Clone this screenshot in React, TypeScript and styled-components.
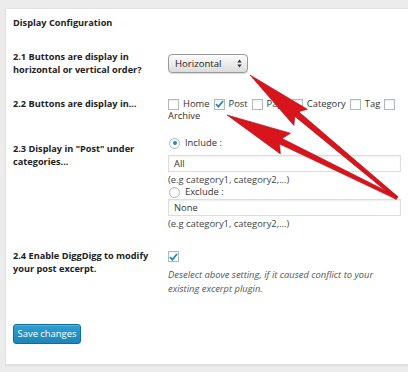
import React from "react";
import styled, { createGlobalStyle } from "styled-components";

const GlobalStyle = createGlobalStyle`
  html, body {
    margin: 0;
    padding: 0;
    background: #ececec;
    width: 408px;
    height: 372px;
    overflow: hidden;
  }
  * { box-sizing: border-box; }
  body {
    font-family: "Open Sans", "Liberation Sans", sans-serif;
    color: #333;
  }
`;

type Pt = [number, number];

// builds a tapered arrow polygon from tail to tip
const arrowPoints = (
  tip: Pt,
  tail: Pt,
  headLen: number,
  headWidth: number,
  shaftNear: number,
  shaftTail: number
) => {
  const dx = tail[0] - tip[0];
  const dy = tail[1] - tip[1];
  const len = Math.sqrt(dx * dx + dy * dy);
  const ux = dx / len;
  const uy = dy / len;
  const nx = -uy;
  const ny = ux;
  const base: Pt = [tip[0] + ux * headLen, tip[1] + uy * headLen];
  const neck: Pt = [base[0] - ux * 5, base[1] - uy * 5];
  const p = (c: Pt, w: number): string =>
    `${(c[0] + nx * w).toFixed(1)},${(c[1] + ny * w).toFixed(1)}`;
  return [
    `${tip[0]},${tip[1]}`,
    p(base, headWidth / 2),
    p(neck, shaftNear / 2),
    p(tail, shaftTail / 2),
    p(tail, -shaftTail / 2),
    p(neck, -shaftNear / 2),
    p(base, -headWidth / 2),
  ].join(" ");
};

const Page = styled.div`
  position: relative;
  width: 408px;
  height: 372px;
  padding-top: 8px;
  padding-left: 5px;
`;

const Panel = styled.div`
  background: #fff;
  border: 1px solid #e2e2e2;
  border-right: none;
  box-shadow: 0 1px 1px rgba(0, 0, 0, 0.05);
  height: 357px;
  padding: 7px 0 0 7px;
`;

const Title = styled.h3`
  margin: 0;
  font-size: 9.2px;
  line-height: 14px;
  font-weight: 700;
  color: #222;
`;

const Row = styled.div<{ $top: number }>`
  display: grid;
  grid-template-columns: 155px 233px;
  margin-top: ${({ $top }) => $top}px;
`;

const Label = styled.div<{ $offset?: number }>`
  font-size: 9.2px;
  line-height: 12.5px;
  font-weight: 700;
  color: #222;
  margin-top: ${({ $offset }) => $offset ?? 0}px;
`;

const Field = styled.div<{ $offset?: number }>`
  font-size: 9.4px;
  line-height: 12px;
  color: #333;
  margin-top: ${({ $offset }) => $offset ?? 0}px;
`;

const Select = styled.div`
  width: 80px;
  height: 19px;
  border: 1px solid #9a9a9a;
  border-radius: 4px;
  background: linear-gradient(#fdfdfd, #dcdcdc);
  box-shadow: 0 1px 1px rgba(0, 0, 0, 0.15);
  display: flex;
  align-items: center;
  justify-content: space-between;
  padding: 0 5px 0 6px;
  font-size: 9.6px;
  color: #222;
`;

const Options = styled.div`
  display: flex;
  flex-wrap: wrap;
  align-items: center;
`;

const Opt = styled.label`
  display: inline-flex;
  align-items: center;
  gap: 4px;
  margin-right: 4px;
  white-space: nowrap;
`;

const Box = styled.span`
  display: inline-flex;
  align-items: center;
  justify-content: center;
  width: 11px;
  height: 11px;
  border: 1px solid #b4b9be;
  background: #fff;
  box-shadow: inset 0 1px 2px rgba(0, 0, 0, 0.08);
`;

const Radio = styled.span<{ $checked?: boolean }>`
  display: inline-flex;
  align-items: center;
  justify-content: center;
  width: 11px;
  height: 11px;
  border: 1px solid #b4b9be;
  border-radius: 50%;
  background: #fff;
  box-shadow: inset 0 1px 2px rgba(0, 0, 0, 0.08);
  &::after {
    content: "";
    display: ${({ $checked }) => ($checked ? "block" : "none")};
    width: 4px;
    height: 4px;
    border-radius: 50%;
    background: #1e8cbe;
  }
`;

const RadioLine = styled.div`
  display: flex;
  align-items: center;
  gap: 5px;
  padding-left: 1px;
`;

const TextInput = styled.div<{ $gap: number }>`
  width: 233px;
  height: 17px;
  margin-top: ${({ $gap }) => $gap}px;
  border: 1px solid #ddd;
  box-shadow: inset 0 1px 2px rgba(0, 0, 0, 0.07);
  padding: 0 5px;
  display: flex;
  align-items: center;
  color: #333;
`;

const Hint = styled.div`
  margin-top: 2px;
  color: #444;
`;

const Note = styled.p`
  margin: 4px 0 0;
  font-style: italic;
  line-height: 14px;
  color: #555;
`;

const SaveButton = styled.button`
  margin-top: 28px;
  width: 68px;
  height: 20px;
  border: 1px solid #0f6e9b;
  border-radius: 3px;
  background: linear-gradient(#2e9fd2, #1e85b8);
  color: #fff;
  font-family: "Open Sans", "Liberation Sans", sans-serif;
  font-size: 9.4px;
  padding: 0;
  box-shadow: inset 0 1px 0 rgba(120, 200, 230, 0.5);
`;

const Arrows = styled.svg`
  position: absolute;
  top: 0;
  left: 0;
  pointer-events: none;
`;

const Check = () => (
  <svg width="9" height="8" viewBox="0 0 9 8">
    <path d="M1 4.2 L3.4 6.6 L8 1" fill="none" stroke="#1e8cbe" strokeWidth="1.8" />
  </svg>
);

const Stepper = () => (
  <svg width="5" height="9" viewBox="0 0 5 9">
    <path d="M2.5 0.5 L4.7 3.5 L0.3 3.5 Z M2.5 8.5 L4.7 5.5 L0.3 5.5 Z" fill="#333" />
  </svg>
);

const places = ["Home", "Post", "Page", "Category", "Tag", "Archive"];

export default function App() {
  const tail: Pt = [397, 198];
  return (
    <Page>
      <GlobalStyle />
      <Panel>
        <Title>Display Configuration</Title>

        <Row $top={21}>
          <Label>
            2.1 Buttons are display in
            <br />
            horizontal or vertical order?
          </Label>
          <Field $offset={3}>
            <Select>
              <span>Horizontal</span>
              <Stepper />
            </Select>
          </Field>
        </Row>

        <Row $top={22}>
          <Label>2.2 Buttons are display in...</Label>
          <Field>
            <Options>
              {places.map((p) => (
                <Opt key={p}>
                  {p !== "Archive" && <Box>{p === "Post" && <Check />}</Box>}
                  {p}
                  {p === "Tag" && <Box />}
                </Opt>
              ))}
            </Options>
          </Field>
        </Row>

        <Row $top={15}>
          <Label $offset={6}>
            2.3 Display in "Post" under
            <br />
            categories...
          </Label>
          <Field>
            <RadioLine>
              <Radio $checked />
              Include :
            </RadioLine>
            <TextInput $gap={6}>All</TextInput>
            <Hint>(e.g category1, category2,...)</Hint>
            <RadioLine>
              <Radio />
              Exclude :
            </RadioLine>
            <TextInput $gap={1}>None</TextInput>
            <Hint>(e.g category1, category2,...)</Hint>
          </Field>
        </Row>

        <Row $top={20}>
          <Label>
            2.4 Enable DiggDigg to modify
            <br />
            your post excerpt.
          </Label>
          <Field $offset={1}>
            <Box>
              <Check />
            </Box>
            <Note>
              Deselect above setting, if it caused conflict to your
              <br />
              existing excerpt plugin.
            </Note>
          </Field>
        </Row>

        <SaveButton>Save changes</SaveButton>
      </Panel>

      <Arrows width="408" height="372" viewBox="0 0 408 372">
        <polygon
          points={arrowPoints([250, 75], tail, 66, 21, 6, 3)}
          fill="#d8141c"
          stroke="#b10c12"
          strokeWidth="0.6"
        />
        <polygon
          points={arrowPoints([227, 115], tail, 65, 23, 6, 3)}
          fill="#d8141c"
          stroke="#b10c12"
          strokeWidth="0.6"
        />
      </Arrows>
    </Page>
  );
}
